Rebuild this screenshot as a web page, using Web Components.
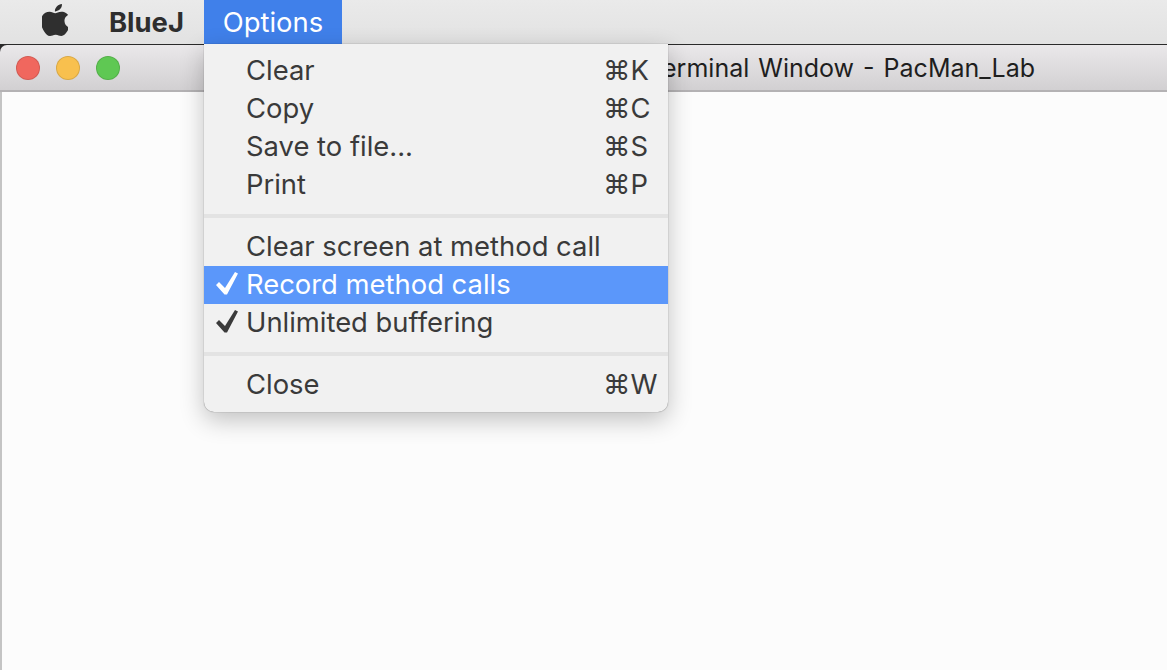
<!DOCTYPE html>
<html>
<head>
<meta charset="utf-8">
<style>
html, body { margin: 0; padding: 0; height: 100%; overflow: hidden; background: #fcfcfc; }
body { font-family: Inter, "Liberation Sans", sans-serif; font-size: 27.4px; }
</style>
</head>
<body>
<mac-desktop>
  <mac-menubar slot="bar"></mac-menubar>
  <term-window slot="win" title-text="Terminal Window - PacMan_Lab"></term-window>
  <mac-menu slot="menu">
    <menu-row key="⌘K">Clear</menu-row>
    <menu-row key="⌘C">Copy</menu-row>
    <menu-row key="⌘S">Save to file...</menu-row>
    <menu-row key="⌘P">Print</menu-row>
    <menu-sep></menu-sep>
    <menu-row>Clear screen at method call</menu-row>
    <menu-row checked active>Record method calls</menu-row>
    <menu-row checked>Unlimited buffering</menu-row>
    <menu-sep></menu-sep>
    <menu-row key="⌘W">Close</menu-row>
  </mac-menu>
</mac-desktop>
<script>
class MacDesktop extends HTMLElement {
    constructor() {
        super();
        this.attachShadow({ mode: "open" });
        this.shadowRoot.innerHTML = `
            <style>
            :host { display: flex; flex-direction: column; position: relative; height: 670px; width: 1167px; overflow: hidden; }
            .over { position: absolute; left: 204px; top: 44px; }
            </style>
            <slot name="bar"></slot>
            <slot name="win"></slot>
            <div class="over"><slot name="menu"></slot></div>`;
    }
}

class MacMenubar extends HTMLElement {
    constructor() {
        super();
        this.attachShadow({ mode: "open" });
        this.shadowRoot.innerHTML = `
            <style>
            :host { display: flex; align-items: stretch; height: 44px; background: linear-gradient(#eaeaea, #e2e2e2); color: #2e2e2e; flex: none; }
            svg { width: 26px; height: 32px; margin: 4px 41px 8px 42px; fill: #2f2f2f; }
            .app { font-weight: 700; line-height: 44px; width: 95px; }
            .open { background: #4080ea; color: #fff; width: 138px; text-align: center; line-height: 44px; }
            </style>
            <svg viewBox="3 0 18 24" preserveAspectRatio="none"><path d="M12.152 6.896c-.948 0-2.415-1.078-3.96-1.04-2.04.027-3.91 1.183-4.961 3.014-2.117 3.675-.546 9.103 1.519 12.09 1.013 1.454 2.208 3.09 3.792 3.039 1.52-.065 2.09-.987 3.935-.987 1.831 0 2.35.987 3.96.948 1.637-.026 2.676-1.48 3.676-2.948 1.156-1.688 1.636-3.325 1.662-3.415-.039-.013-3.182-1.221-3.22-4.857-.026-3.04 2.48-4.494 2.597-4.559-1.429-2.09-3.623-2.324-4.39-2.376-2-.156-3.675 1.09-4.61 1.09zM15.53 3.83c.843-1.012 1.4-2.427 1.245-3.83-1.207.052-2.662.805-3.532 1.818-.78.896-1.454 2.338-1.273 3.714 1.338.104 2.715-.688 3.559-1.701"/></svg>
            <span class="app">BlueJ</span>
            <span class="open">Options</span>`;
    }
}

class TermWindow extends HTMLElement {
    constructor() {
        super();
        this.attachShadow({ mode: "open" });
        this.shadowRoot.innerHTML = `
            <style>
            :host { display: flex; flex-direction: column; flex: 1; background: #2a2a2a; padding-top: 1px; }
            .bar { display: flex; align-items: center; height: 47px; flex: none; box-sizing: border-box; padding: 0 132px 0 16px; gap: 16px; border-radius: 7px 0 0 0; border-bottom: 2px solid #b4b2b4; background: linear-gradient(#eae8ea, #d2d0d2); color: #1e1e1e; }
            .dot { width: 24px; height: 24px; box-sizing: border-box; border-radius: 50%; border: 1px solid rgba(0,0,0,.12); }
            .title { margin-left: auto; white-space: nowrap; font-size: 25px; word-spacing: 2px; }
            .body { flex: 1; background: #fcfcfc; border-left: 2px solid #c4c4c4; }
            </style>
            <div class="bar">
                <span class="dot" style="background:#f0675e"></span>
                <span class="dot" style="background:#f8c04e"></span>
                <span class="dot" style="background:#5fc853"></span>
                <span class="title"></span>
            </div>
            <div class="body"></div>`;
    }
    connectedCallback() {
        this.shadowRoot.querySelector(".title").textContent = this.getAttribute("title-text");
    }
}

class MacMenu extends HTMLElement {
    constructor() {
        super();
        this.attachShadow({ mode: "open" });
        this.shadowRoot.innerHTML = `
            <style>
            :host { display: block; width: 464px; box-sizing: border-box; padding: 7px 0 9px; background: #f1f1f1; border-radius: 0 0 10px 10px; box-shadow: 0 0 1px rgba(0,0,0,.6), 0 8px 24px rgba(0,0,0,.24); color: #3a3a3a; }
            </style>
            <slot></slot>`;
    }
}

class MenuRow extends HTMLElement {
    constructor() {
        super();
        this.attachShadow({ mode: "open" });
        this.shadowRoot.innerHTML = `
            <style>
            :host { display: flex; align-items: center; box-sizing: border-box; height: 38px; padding: 0 10px; }
            /* highlight sits one pixel lower than the text row */
            :host([active]) { background: #5b97fa; color: #fff; margin: 1px 0 -1px; padding-bottom: 2px; }
            .mark { width: 33px; flex: none; display: flex; }
            svg { width: 26px; height: 26px; fill: currentColor; visibility: hidden; }
            :host([checked]) svg { visibility: visible; }
            .label { margin-left: -1px; }
            .key { margin-left: auto; width: 55px; white-space: nowrap; }
            </style>
            <span class="mark"><svg viewBox="0 0 26 26"><path d="M2 14 L5 11 L11 17 L21 1 L24 2.500 L13 23.500 L10.500 23.500 Z"/></svg></span>
            <span class="label"><slot></slot></span>
            <span class="key"></span>`;
    }
    connectedCallback() {
        this.shadowRoot.querySelector(".key").textContent = this.getAttribute("key") || "";
    }
}

class MenuSep extends HTMLElement {
    constructor() {
        super();
        this.attachShadow({ mode: "open" });
        this.shadowRoot.innerHTML = `
            <style>
            :host { display: block; height: 4px; margin: 11px 0 9px; background: #e3e3e3; }
            </style>`;
    }
}

customElements.define("mac-desktop", MacDesktop);
customElements.define("mac-menubar", MacMenubar);
customElements.define("term-window", TermWindow);
customElements.define("mac-menu", MacMenu);
customElements.define("menu-row", MenuRow);
customElements.define("menu-sep", MenuSep);
</script>
</body>
</html>
